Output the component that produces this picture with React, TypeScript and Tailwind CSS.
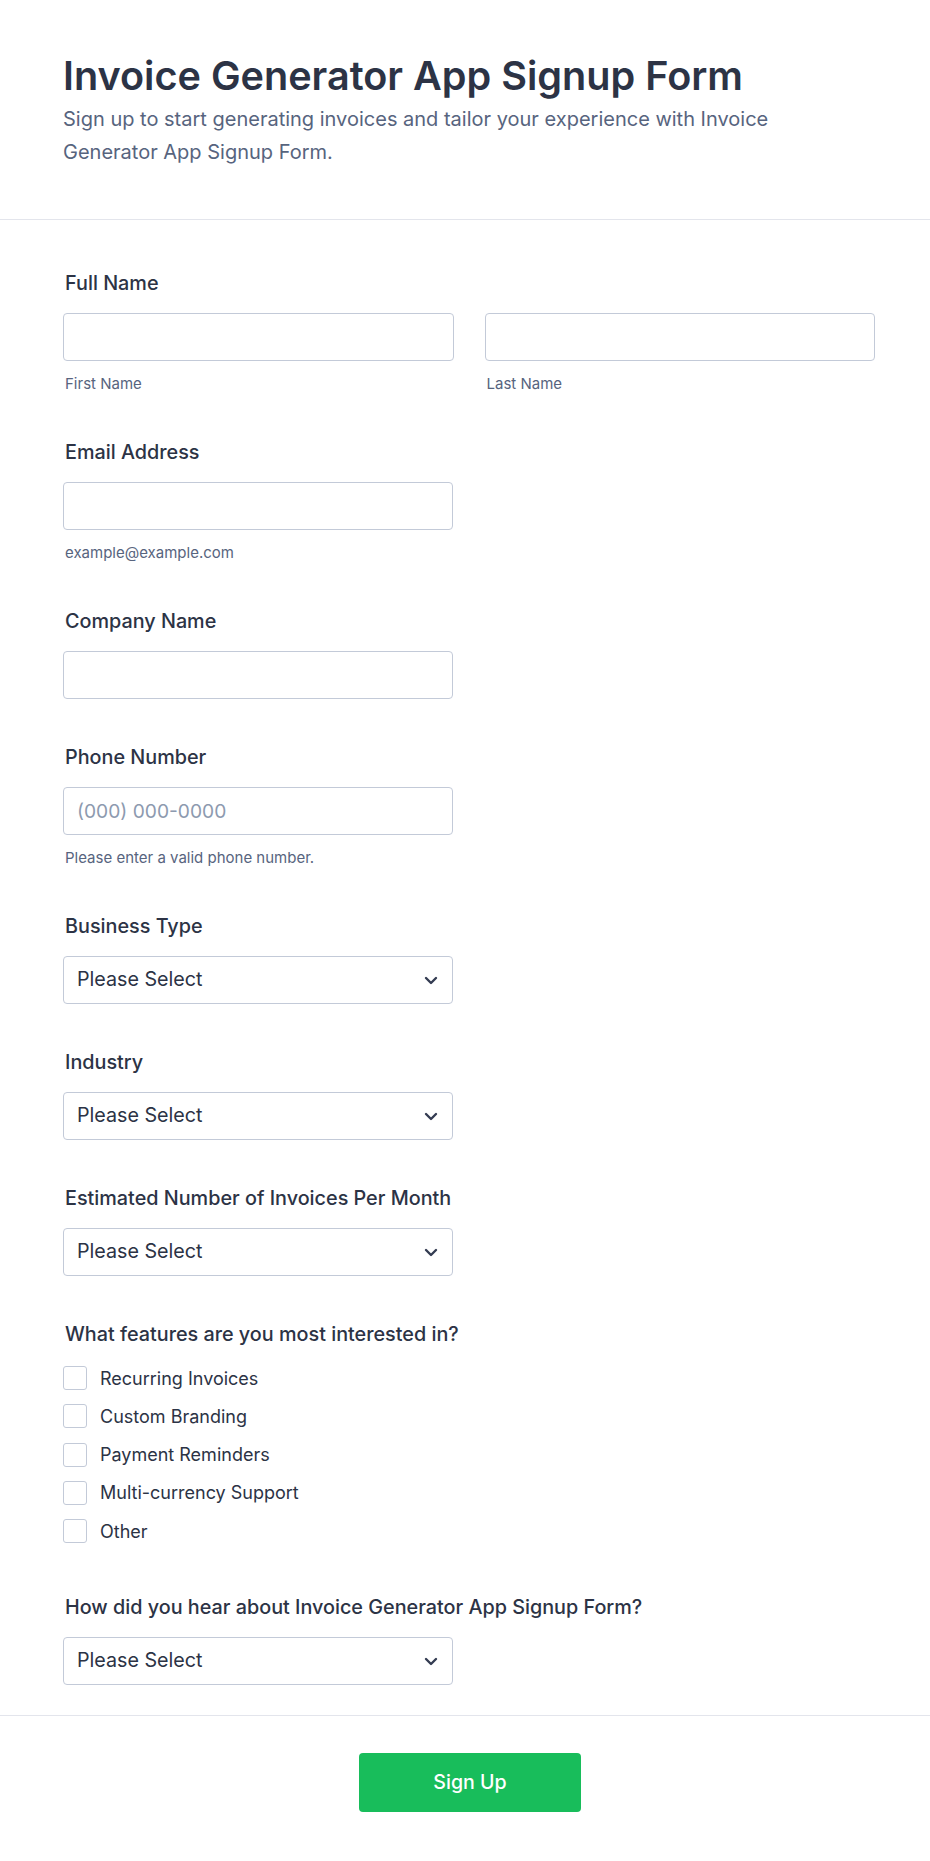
import React from "react";

const font = { fontFamily: "Inter, 'Noto Sans', sans-serif" };

function Chevron() {
  return (
    <svg width="14" height="9" viewBox="0 0 14 9" fill="none" className="shrink-0">
      <path d="M2 2l5 5 5-5" stroke="#343c52" strokeWidth="2.4" strokeLinecap="round" strokeLinejoin="round" />
    </svg>
  );
}

function Label({ children }: { children: React.ReactNode }) {
  return (
    <div className="mt-[1px] h-[24px] text-[19.8px] leading-[24px] font-medium text-[#2c3345] pl-[2px] whitespace-nowrap">
      {children}
    </div>
  );
}

function Input({ placeholder, className = "" }: { placeholder?: string; className?: string }) {
  return (
    <div className={`h-[48px] border border-[#c3cad8] rounded-[4px] bg-white flex items-center px-[13px] ${className}`}>
      {placeholder ? <span className="text-[19.2px] text-[#8d9aaf]">{placeholder}</span> : null}
    </div>
  );
}

function Select() {
  return (
    <div className="h-[48px] w-[390px] border border-[#c3cad8] rounded-[4px] bg-white flex items-center justify-between pl-[13px] pr-[14px]">
      <span className="text-[19.7px] text-[#2c3345]">Please Select</span>
      <Chevron />
    </div>
  );
}

function Sub({ children }: { children: React.ReactNode }) {
  return <div className="mt-[13px] h-[20px] text-[15px] leading-[20px] text-[#57647e] pl-[2px]">{children}</div>;
}

export default function App() {
  const features = ["Recurring Invoices", "Custom Branding", "Payment Reminders", "Multi-currency Support", "Other"];
  return (
    <div className="w-[930px] min-h-[1861px] bg-white" style={font}>
      <header className="pt-[52px] pb-[50px] border-b border-[#e3e5ec] px-[63px]">
        <h1 className="text-[39.6px] leading-[48px] font-semibold text-[#2c3345]">
          Invoice Generator App Signup Form
        </h1>
        <p className="mt-[3px] text-[20px] leading-[33px] text-[#57647e] w-[740px]">
          Sign up to start generating invoices and tailor your experience with Invoice Generator App Signup Form.
        </p>
      </header>

      <main className="px-[63px] pt-[50px] flex flex-col">
        <section className="pb-[45px]">
          <Label>Full Name</Label>
          <div className="mt-[18px] flex gap-[31px] w-[812px]">
            <div className="flex-1">
              <Input />
              <Sub>First Name</Sub>
            </div>
            <div className="flex-1">
              <Input />
              <Sub>Last Name</Sub>
            </div>
          </div>
        </section>

        <section className="pb-[45px]">
          <Label>Email Address</Label>
          <div className="mt-[18px] w-[390px]">
            <Input />
            <Sub>example@example.com</Sub>
          </div>
        </section>

        <section className="pb-[45px]">
          <Label>Company Name</Label>
          <div className="mt-[18px] w-[390px]">
            <Input />
          </div>
        </section>

        <section className="pb-[45px]">
          <Label>Phone Number</Label>
          <div className="mt-[18px] w-[390px]">
            <Input placeholder="(000) 000-0000" />
            <Sub>Please enter a valid phone number.</Sub>
          </div>
        </section>

        <section className="pb-[45px]">
          <Label>Business Type</Label>
          <div className="mt-[18px]">
            <Select />
          </div>
        </section>

        <section className="pb-[45px]">
          <Label>Industry</Label>
          <div className="mt-[18px]">
            <Select />
          </div>
        </section>

        <section className="pb-[45px]">
          <Label>Estimated Number of Invoices Per Month</Label>
          <div className="mt-[18px]">
            <Select />
          </div>
        </section>

        <section className="pb-[51px]">
          <Label>What features are you most interested in?</Label>
          <div className="mt-[20px] flex flex-col gap-[14.3px]">
            {features.map((f) => (
              <label key={f} className="flex items-center gap-[13px] h-[24px]">
                <span className="w-[24px] h-[24px] border border-[#c3cad8] rounded-[3px] bg-white shrink-0" />
                <span className="text-[18px] leading-[24px] text-[#2c3345] pt-[1px]">{f}</span>
              </label>
            ))}
          </div>
        </section>

        <section className="pb-[30px]">
          <Label>How did you hear about Invoice Generator App Signup Form?</Label>
          <div className="mt-[18px]">
            <Select />
          </div>
        </section>
      </main>

      <div className="border-t border-[#e3e5ec] pt-[37px] pb-[50px] flex justify-center pl-[10px]">
        <button className="w-[222px] h-[59px] rounded-[4px] bg-[#18bd5b] text-white text-[19.6px] font-medium">
          Sign Up
        </button>
      </div>
    </div>
  );
}
